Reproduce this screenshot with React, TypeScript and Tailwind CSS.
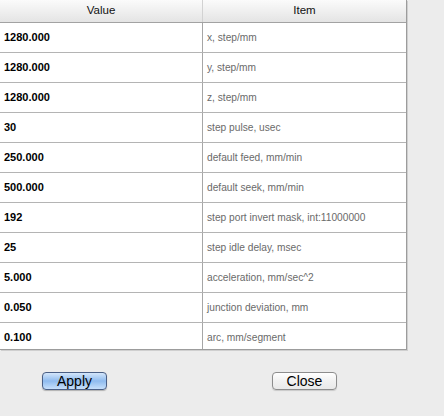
import React from "react";

const rows: [string, string][] = [
  ["1280.000", "x, step/mm"],
  ["1280.000", "y, step/mm"],
  ["1280.000", "z, step/mm"],
  ["30", "step pulse, usec"],
  ["250.000", "default feed, mm/min"],
  ["500.000", "default seek, mm/min"],
  ["192", "step port invert mask, int:11000000"],
  ["25", "step idle delay, msec"],
  ["5.000", "acceleration, mm/sec^2"],
  ["0.050", "junction deviation, mm"],
  ["0.100", "arc, mm/segment"],
];

export default function App() {
  return (
    <div
      className="w-[444px] h-[416px] bg-[#ececec] overflow-hidden flex flex-col"
      style={{ fontFamily: '"Liberation Sans", Arial, sans-serif' }}
    >
      <div className="w-[407px] h-[350px] bg-white border-r border-b border-r-[#9c9c9c] border-b-[#9c9c9c] shadow-[1px_1px_0_#cfcfcf] overflow-hidden flex flex-col">
        <div className="flex h-[23px] shrink-0 border-b border-[#a2a2a2] bg-gradient-to-b from-[#fbfbfb] to-[#e4e4e4]">
          <div className="w-[203px] border-r border-[#d2d2d2] flex items-center justify-center text-[11.5px] text-[#111]">
            Value
          </div>
          <div className="flex-1 flex items-center justify-center text-[11.5px] text-[#111]">
            Item
          </div>
        </div>
        {rows.map(([v, item], i) => (
          <div key={i} className="flex h-[30px] shrink-0 border-b border-[#b4b4b4]">
            <div className="w-[203px] border-r border-[#a6a6a6] flex items-center pl-[4px] text-[11px] font-bold text-black">
              {v}
            </div>
            <div className="flex-1 flex items-center pl-[4px] text-[10.2px] text-[#6a6a6a]">
              {item}
            </div>
          </div>
        ))}
      </div>
      <div className="flex items-start pt-[22px] pl-[42px] gap-[165px]">
        <button className="w-[65px] h-[18px] rounded-[4px] border border-[#4a5f85] bg-gradient-to-b from-[#d4e6fa] via-[#8fbbee] to-[#c7e0fb] shadow-[0_1px_1px_rgba(0,0,0,0.25)] flex items-center justify-center text-[14px] leading-none text-black">
          Apply
        </button>
        <button className="w-[65px] h-[18px] rounded-[4px] border border-[#8d8d8d] bg-gradient-to-b from-[#ffffff] via-[#f1f1f1] to-[#e9e9e9] shadow-[0_1px_1px_rgba(0,0,0,0.15)] flex items-center justify-center text-[14px] leading-none text-black">
          Close
        </button>
      </div>
    </div>
  );
}
